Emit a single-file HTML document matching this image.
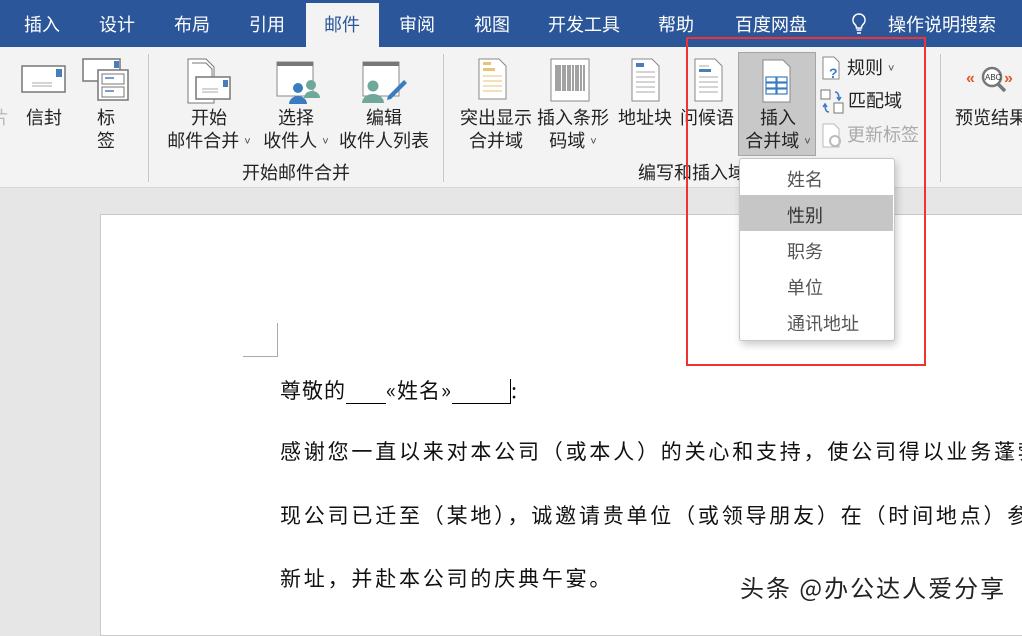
<!DOCTYPE html>
<html><head><meta charset="utf-8"><style>
body{margin:0;width:1022px;height:618px;overflow:hidden;position:relative;background:#e6e6e6;font-family:"Liberation Sans","Noto Sans CJK SC",sans-serif;}
.a{position:absolute;white-space:nowrap}
.tab{position:absolute;top:11px;color:#fff;font-size:18px}
.lb{position:absolute;font-size:18px;color:#222;text-align:center;line-height:23px;white-space:nowrap}
.ar{font-size:11px;color:#444;vertical-align:2px}
.doc{position:absolute;font-size:21px;letter-spacing:2.8px;color:#111;font-family:"Noto Sans CJK SC",sans-serif;white-space:nowrap}
.mi{position:absolute;left:787px;font-size:18px;color:#555}
</style></head><body>
<div class="a" style="left:0;top:0;width:1022px;height:47px;background:#2b579a"></div>
<div class="a" style="left:306px;top:3px;width:73px;height:44px;background:#f3f3f3"></div>
<div class="tab" style="left:24px">插入</div>
<div class="tab" style="left:99px">设计</div>
<div class="tab" style="left:174px">布局</div>
<div class="tab" style="left:249px">引用</div>
<div class="tab" style="left:324px;color:#2b579a">邮件</div>
<div class="tab" style="left:399px">审阅</div>
<div class="tab" style="left:474px">视图</div>
<div class="tab" style="left:548px">开发工具</div>
<div class="tab" style="left:658px">帮助</div>
<div class="tab" style="left:735px">百度网盘</div>
<svg class="a" style="left:850px;top:12px" width="18" height="24"><path d="M9 2a6 6 0 0 0-4 10.5c1 1 1.5 2 1.5 3.5h5c0-1.5.5-2.5 1.5-3.5A6 6 0 0 0 9 2zM6.5 18h5M7 21h4" stroke="#fff" stroke-width="1.5" fill="none"/></svg>
<div class="tab" style="left:888px">操作说明搜索</div>

<div class="a" style="left:0;top:47px;width:1022px;height:140px;background:#f3f3f3;border-bottom:1px solid #d6d6d6"></div>
<div class="a" style="left:148px;top:54px;width:1px;height:128px;background:#c8c8c8"></div>
<div class="a" style="left:443px;top:54px;width:1px;height:128px;background:#c8c8c8"></div>
<div class="a" style="left:940px;top:54px;width:1px;height:128px;background:#c8c8c8"></div>

<svg class="a" style="left:20px;top:64px" width="48" height="32"><rect x="2" y="2" width="43" height="26" fill="#fff" stroke="#777" stroke-width="1.5"/><rect x="36" y="5" width="6" height="8" fill="#4a7ebb"/><path d="M12 19h20M12 22h20" stroke="#aaa"/></svg>
<div class="lb" style="left:-9px;top:107px;color:#bbb">片</div>
<div class="lb" style="left:26px;top:107px">信封</div>
<svg class="a" style="left:82px;top:57px" width="48" height="44"><rect x="1" y="2" width="37" height="22" fill="#fff" stroke="#777" stroke-width="1.5"/><rect x="32" y="4" width="5" height="7" fill="#4a7ebb"/><rect x="16" y="13" width="30" height="30" fill="#fff" stroke="#777" stroke-width="1.5"/><rect x="20" y="17" width="22" height="10" fill="none" stroke="#777"/><rect x="20" y="30" width="22" height="10" fill="none" stroke="#777"/><path d="M23 21h9M23 34h9" stroke="#4a7ebb" stroke-width="1.5"/></svg>
<div class="lb" style="left:97px;top:107px">标<br>签</div>

<svg class="a" style="left:186px;top:57px" width="48" height="48"><path d="M2 2h18l8 8v36H2z" fill="#fff" stroke="#777"/><path d="M6 6h14l6 6v30" fill="none" stroke="#777"/><rect x="10" y="20" width="34" height="22" fill="#fff" stroke="#777" stroke-width="1.5"/><rect x="37" y="23" width="5" height="7" fill="#4a7ebb"/><path d="M16 32h16M16 35h16" stroke="#aaa"/></svg>
<div class="lb" style="left:162px;top:107px;width:94px">开始<br>邮件合并 <span class="ar">˅</span></div>
<svg class="a" style="left:276px;top:60px" width="46" height="44"><rect x="1" y="2" width="36" height="34" fill="#fff" stroke="#888"/><rect x="1" y="2" width="36" height="4" fill="#777"/><circle cx="22" cy="28" r="5" fill="#3a7cc0"/><path d="M13 44a9 8 0 0 1 18 0z" fill="#3a7cc0"/><circle cx="35" cy="25" r="5" fill="#6fa89a"/><path d="M28 38a8 7 0 0 1 16 0z" fill="#6fa89a"/></svg>
<div class="lb" style="left:258px;top:107px;width:76px">选择<br>收件人 <span class="ar">˅</span></div>
<svg class="a" style="left:360px;top:60px" width="50" height="44"><rect x="3" y="2" width="36" height="34" fill="#fff" stroke="#888"/><rect x="3" y="2" width="36" height="4" fill="#777"/><circle cx="13" cy="26" r="5.5" fill="#6fa89a"/><path d="M2 43a11 9 0 0 1 22 0z" fill="#6fa89a"/><path d="M28 36l16-16 3 3-16 16-4 1z" fill="#3a7cc0"/></svg>
<div class="lb" style="left:338px;top:107px;width:92px">编辑<br>收件人列表</div>
<div class="lb" style="left:242px;top:162px">开始邮件合并</div>

<svg class="a" style="left:476px;top:57px" width="32" height="44"><path d="M3 2h20l7 7v33H3z" fill="#fff" stroke="#888"/><rect x="7" y="5" width="8" height="3" fill="#e8c37a"/><rect x="7" y="11" width="12" height="3" fill="#e8c37a"/><path d="M7 19h19M7 24h19M7 29h19M7 34h19" stroke="#e8c37a"/></svg>
<div class="lb" style="left:458px;top:107px;width:76px">突出显示<br>合并域</div>
<svg class="a" style="left:549px;top:57px" width="42" height="46"><rect x="2" y="2" width="38" height="42" fill="#fff" stroke="#888"/><path d="M7 8v26M9 8v26M11 8v26M14 8v26M16 8v26M19 8v26M21 8v26M24 8v26M27 8v26M29 8v26M32 8v26M35 8v26" stroke="#444"/></svg>
<div class="lb" style="left:535px;top:107px;width:76px">插入条形<br>码域 <span class="ar">˅</span></div>
<svg class="a" style="left:629px;top:57px" width="32" height="46"><path d="M3 2h20l7 7v35H3z" fill="#fff" stroke="#888"/><rect x="7" y="6" width="8" height="4" fill="#4a7ebb"/><path d="M7 15h19M7 20h19M7 25h19M7 30h19M7 35h19" stroke="#aaa"/></svg>
<div class="lb" style="left:618px;top:107px">地址块</div>
<svg class="a" style="left:692px;top:57px" width="32" height="46"><path d="M3 2h20l7 7v35H3z" fill="#fff" stroke="#888"/><path d="M7 9h10" stroke="#aaa"/><rect x="7" y="12" width="12" height="3" fill="#4a7ebb"/><path d="M7 20h19M7 25h19M7 30h19M7 35h19" stroke="#aaa"/></svg>
<div class="lb" style="left:680px;top:107px">问候语</div>
<div class="a" style="left:738px;top:52px;width:76px;height:102px;background:#c8c8c8;border:1px solid #a5a5a5"></div>
<svg class="a" style="left:760px;top:58px" width="32" height="46"><path d="M3 2h20l7 7v35H3z" fill="#fff" stroke="#888"/><g fill="none" stroke="#3a7cc0" stroke-width="1.2"><rect x="6" y="19" width="10" height="5"/><rect x="17" y="19" width="10" height="5"/><rect x="6" y="25" width="10" height="5"/><rect x="17" y="25" width="10" height="5"/><rect x="6" y="31" width="10" height="5"/><rect x="17" y="31" width="10" height="5"/></g></svg>
<div class="lb" style="left:738px;top:107px;width:80px">插入<br>合并域 <span class="ar">˅</span></div>

<svg class="a" style="left:822px;top:56px" width="20" height="24"><path d="M1 1h11l5 5v17H1z" fill="#fff" stroke="#888"/><text x="7" y="22" font-size="14" font-weight="bold" fill="#3a7cc0">?</text></svg>
<div class="lb" style="left:847px;top:57px">规则 <span class="ar">˅</span></div>
<svg class="a" style="left:820px;top:89px" width="24" height="26"><rect x="1" y="1" width="9" height="9" fill="#fff" stroke="#777"/><rect x="14" y="14" width="9" height="10" fill="#fff" stroke="#777"/><path d="M15 3q4 0 4 7M17 8l2 3 2-3M9 23q-4 0-4-7M3 18l2-3 2 3" stroke="#3a7cc0" stroke-width="1.5" fill="none"/></svg>
<div class="lb" style="left:848px;top:90px">匹配域</div>
<svg class="a" style="left:822px;top:123px" width="22" height="26"><path d="M1 1h11l5 5v18H1z" fill="#fff" stroke="#bbb"/><circle cx="13" cy="18" r="5" fill="none" stroke="#bbb" stroke-width="2"/></svg>
<div class="lb" style="left:847px;top:124px;color:#aaa">更新标签</div>
<div class="lb" style="left:638px;top:162px">编写和插入域</div>

<svg class="a" style="left:966px;top:64px" width="54" height="36"><text x="0" y="19" font-size="16" fill="#e05a2b" font-weight="bold">«</text><circle cx="26" cy="13" r="9" fill="#fff" stroke="#777" stroke-width="2.5"/><text x="19" y="16" font-size="8" fill="#333">ABC</text><path d="M32 20l7 7" stroke="#777" stroke-width="3.5"/><text x="38" y="19" font-size="16" fill="#e05a2b" font-weight="bold">»</text></svg>
<div class="lb" style="left:955px;top:107px">预览结果</div>

<div class="a" style="left:100px;top:214px;width:940px;height:420px;background:#fff;border:1px solid #c8c8c8"></div>
<div class="a" style="left:243px;top:323px;width:34px;height:33px;border-right:1px solid #aaa;border-bottom:1px solid #aaa"></div>
<div class="doc" style="left:280px;top:375px;letter-spacing:1px">尊敬的<span style="display:inline-block;width:40px;height:24px;border-bottom:1px solid #000;vertical-align:-6px"></span>«姓名»<span style="display:inline-block;width:58px;height:24px;border-bottom:1px solid #000;border-right:1px solid #000;vertical-align:-6px"></span>:</div>
<div class="doc" style="left:280px;top:436px">感谢您一直以来对本公司（或本人）的关心和支持，使公司得以业务蓬勃</div>
<div class="doc" style="left:280px;top:500px">现公司已迁至（某地），诚邀请贵单位（或领导朋友）在（时间地点）参</div>
<div class="doc" style="left:280px;top:563px">新址，并赴本公司的庆典午宴。</div>
<div class="a" style="left:740px;top:569px;font-size:24px;letter-spacing:2px;color:#222;text-shadow:1px 1px 0 #fff,-1px -1px 0 #fff;font-family:'Noto Sans CJK SC',sans-serif">头条 @办公达人爱分享</div>

<div class="a" style="left:739px;top:158px;width:154px;height:181px;background:#fff;border:1px solid #c6c6c6;border-radius:3px;box-shadow:2px 4px 8px rgba(0,0,0,.2)"></div>
<div class="a" style="left:740px;top:195px;width:153px;height:36px;background:#c6c6c6"></div>
<div class="mi" style="top:166px">姓名</div>
<div class="mi" style="top:202px;color:#333">性别</div>
<div class="mi" style="top:238px">职务</div>
<div class="mi" style="top:274px">单位</div>
<div class="mi" style="top:310px">通讯地址</div>
<div class="a" style="left:686px;top:37px;width:236px;height:325px;border:2px solid #ee3333"></div>
</body></html>
